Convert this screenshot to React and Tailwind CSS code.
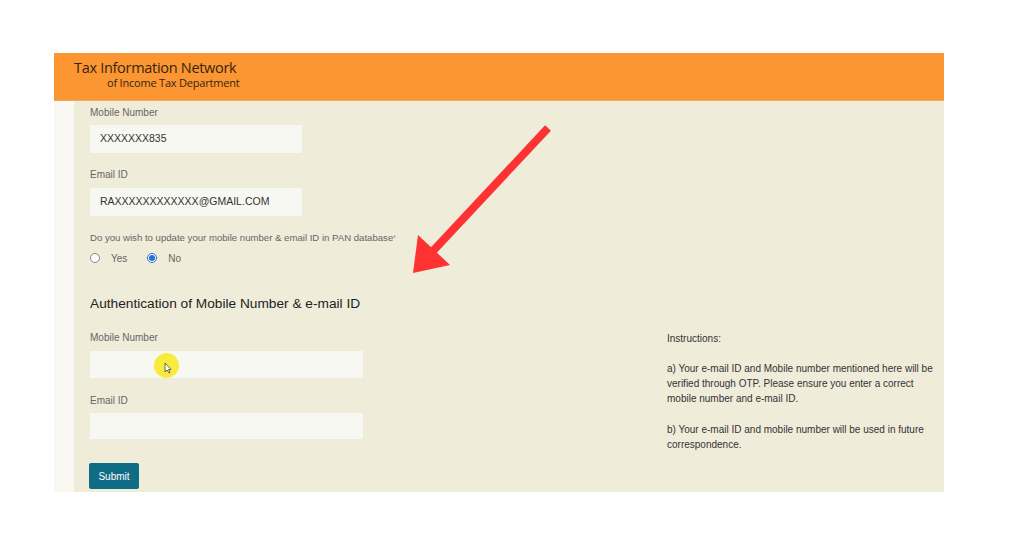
import React from "react";

export default function App() {
  const sans = { fontFamily: '"Liberation Sans", Arial, sans-serif' };
  return (
    <div className="relative w-[1024px] h-[536px] bg-white overflow-hidden" style={sans}>
      <div className="ml-[54px] pt-[53px] w-[890px]">
        {/* Header */}
        <div className="h-[48px] bg-[#fb9633] pl-[20px] pt-[6px] border-b border-[#f0a860]" style={{ fontFamily: '"Open Sans", sans-serif' }}>
          <div className="text-[14.5px] leading-[17px] font-medium text-[#35250f] tracking-[-0.3px]">Tax Information Network</div>
          <div className="text-[11px] leading-[13px] font-medium text-[#35250f] pl-[33px] tracking-[-0.2px]">of Income Tax Department</div>
        </div>
        {/* Body */}
        <div className="flex h-[391px]">
          <div className="w-[20px] bg-[#f9f8f3]" />
          <div className="flex-1 bg-[#f0ecda] pl-[16px] pt-[6px]">
            <div className="text-[10px] leading-[12px] text-[#666]">Mobile Number</div>
            <div className="mt-[6px] w-[212px] h-[28px] bg-[#f8f8f2] flex items-center pl-[10px] text-[10.5px] text-[#333]">XXXXXXX835</div>
            <div className="mt-[16px] text-[10px] leading-[12px] text-[#666]">Email ID</div>
            <div className="mt-[7px] w-[212px] h-[28px] bg-[#f8f8f2] flex items-center pl-[10px] text-[10.5px] text-[#333]">RAXXXXXXXXXXXX@GMAIL.COM</div>
            <div className="mt-[16px] text-[9.6px] leading-[12px] text-[#666]">
              Do you wish to update your mobile number &amp; email ID in PAN database<span className="text-[#c66] align-top text-[7px]">*</span>
            </div>
            <div className="mt-[8px] flex items-center text-[10px] text-[#666] h-[12px]">
              <span className="w-[10px] h-[10px] rounded-full border border-[#888] bg-white" />
              <span className="ml-[11px]">Yes</span>
              <span className="ml-[20px] w-[10px] h-[10px] rounded-full border border-[#2a6fd6] bg-white flex items-center justify-center">
                <span className="w-[6px] h-[6px] rounded-full bg-[#2a6fd6]" />
              </span>
              <span className="ml-[11px]">No</span>
            </div>
            <div className="mt-[31px] text-[13.7px] leading-[18px] text-[#222]">Authentication of Mobile Number &amp; e-mail ID</div>
            <div className="flex">
              <div className="w-[273px]">
                <div className="mt-[19px] text-[10px] leading-[12px] text-[#666]">Mobile Number</div>
                <div className="mt-[7px] w-[273px] h-[27px] bg-[#f8f8f2]" />
                <div className="mt-[17px] text-[10px] leading-[12px] text-[#666]">Email ID</div>
                <div className="mt-[6px] w-[273px] h-[26px] bg-[#f8f8f2]" />
                <button className="mt-[24px] -ml-[1px] w-[50px] h-[26px] bg-[#0f6c85] text-white text-[10px] rounded-[2px]">Submit</button>
              </div>
              <div className="ml-[304px] mt-[18px] w-[268px] text-[10px] leading-[15px] text-[#333]">
                <p>Instructions:</p>
                <p className="mt-[15px]">a) Your e-mail ID and Mobile number mentioned here will be verified through OTP. Please ensure you enter a correct mobile number and e-mail ID.</p>
                <p className="mt-[16px]">b) Your e-mail ID and mobile number will be used in future correspondence.</p>
              </div>
            </div>
          </div>
        </div>
      </div>

      {/* Red arrow overlay */}
      <svg className="absolute left-0 top-0" width="1024" height="536" viewBox="0 0 1024 536">
        <line x1="548" y1="128" x2="432" y2="252" stroke="#fd3232" strokeWidth="8" strokeLinecap="butt" />
        <polygon points="413,273 418,235 450,265" fill="#fd3232" />
      </svg>

      {/* Cursor highlight */}
      <div className="absolute left-[154px] top-[353px] w-[25px] h-[25px] rounded-full bg-[#f8e82a] opacity-90" />
      <svg className="absolute left-[164px] top-[362px]" width="8" height="12" viewBox="0 0 8 12">
        <path d="M1 1 L1 10 L3 8 L5 11 L6 10.5 L4.5 7.5 L7 7.5 Z" fill="white" stroke="#444" strokeWidth="0.8" />
      </svg>
    </div>
  );
}
